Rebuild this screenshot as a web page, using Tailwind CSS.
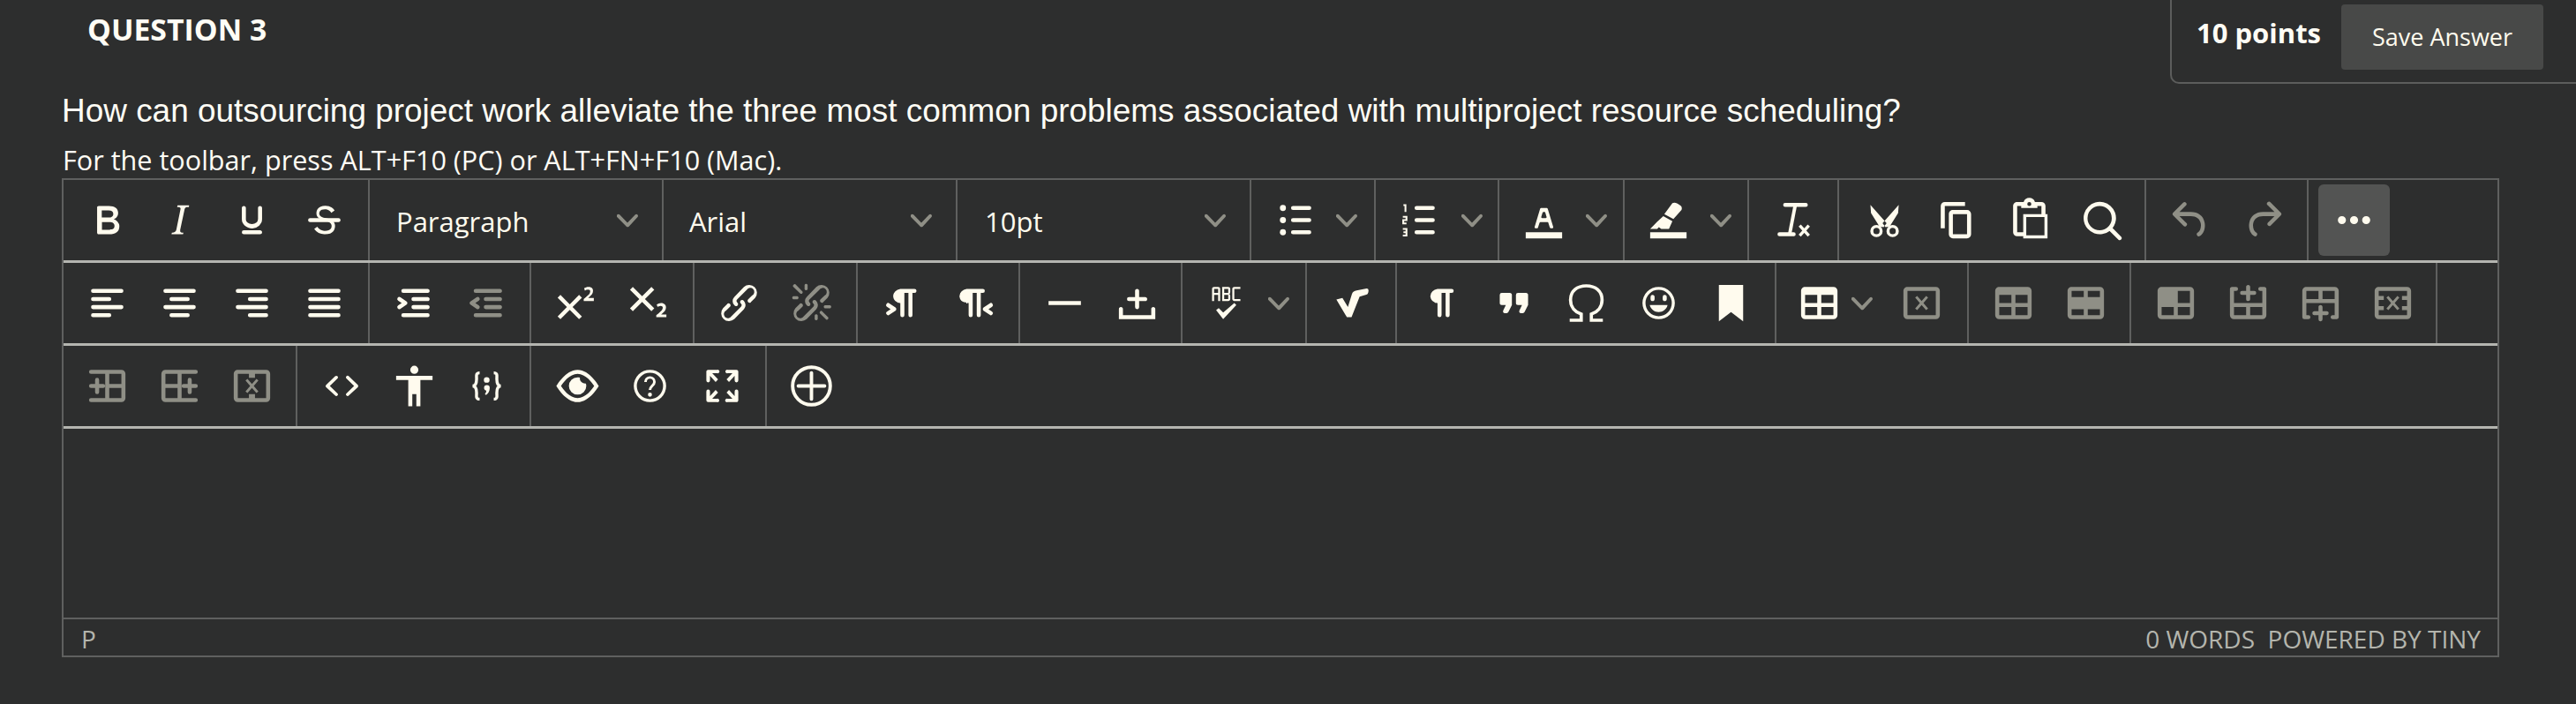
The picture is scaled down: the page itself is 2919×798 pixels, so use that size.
<!DOCTYPE html>
<html lang="en">
<head>
    <meta charset="UTF-8">
    <title>Question 3</title>
    <script src="https://cdn.jsdelivr.net/npm/@tailwindcss/browser@4"></script>
</head>
<body class="bg-[#2d2e2e] text-[#fffbee] font-['Open_Sans',sans-serif] h-[798px] overflow-hidden">

<!-- Header -->
<div class="flex justify-between h-[95px]">
    <h2 class="pl-[99px] pt-[10px] text-[33.8px] leading-[46px] font-bold text-[#fffdf5]">QUESTION 3</h2>
    <div class="w-[460px] h-[95px] border-l-2 border-b-2 border-[#5c5d5c] rounded-bl-[10px] flex items-start pl-[28px] pt-[5px]">
        <span class="text-[31px] leading-[64px] font-bold text-[#fffdf5] mr-[23px]">10 points</span>
        <button class="w-[229px] h-[74px] bg-[#484948] rounded-[4px] text-[27px] text-[#fffbee]">Save Answer</button>
    </div>
</div>

<div class="pl-[70px]">
    <p class="font-['Liberation_Sans',sans-serif] text-[36.95px] leading-[46px] mt-[8px] text-[#fffdf5]">How can outsourcing project work alleviate the three most common problems associated with multiproject resource scheduling?</p>
    <p class="text-[30.6px] leading-[41px] mt-[12px] pl-[1px] text-[#fffdf5]">For the toolbar, press ALT+F10 (PC) or ALT+FN+F10 (Mac).</p>

    <!-- Editor -->
    <div class="w-[2762px] border-2 border-[#5f605f]">

        <!-- Row 1 -->
        <div class="flex h-[94px] border-b-[3px] border-[#b4b5b0]">
            <div class="w-[347px] flex items-center justify-center border-r-2 border-[#5f605f]">
                <button class="w-[82px] flex justify-center"><svg viewBox="0 0 24 24" class="w-[55px] h-[55px] fill-current"><path d="M7.8 19c-.3 0-.5 0-.6-.2l-.2-.5V5.700c0-.2 0-.4.2-.5l.6-.2h5c1.500 0 2.700.3 3.500 1 .7.6 1.100 1.400 1.100 2.500a3 3 0 0 1-.6 1.900c-.4.6-1 1-1.600 1.200.4.1.9.3 1.300.6s.8.7 1 1.200c.4.4.5 1 .5 1.600 0 1.300-.4 2.300-1.300 3-.8.7-2.100 1-3.800 1H7.800zm5-8.300c.6 0 1.200-.1 1.600-.5.4-.3.6-.7.6-1.300 0-1.100-.8-1.700-2.300-1.700H9.300v3.500h3.400zm.5 6c.7 0 1.300-.1 1.700-.4.4-.4.6-.9.6-1.500s-.2-1-.7-1.400c-.4-.3-1-.4-2-.4H9.400v3.800h4z"/></svg></button>
                <button class="w-[82px] flex justify-center"><svg viewBox="0 0 24 24" class="w-[55px] h-[55px] fill-current"><path d="M16.700 4.700l-.1.9h-.3c-.6 0-1 0-1.400.3-.3.3-.4.6-.5 1.100l-2.100 9.800v.6c0 .5.4.8 1.400.8h.2l-.2.8H8l.2-.8h.2c1.100 0 1.800-.5 2-1.500l2-9.800.1-.5c0-.6-.4-.8-1.400-.8h-.3l.2-.9h5.800z"/></svg></button>
                <button class="w-[82px] flex justify-center"><svg viewBox="0 0 24 24" class="w-[55px] h-[55px] fill-current"><path d="M16 5c.6 0 1 .4 1 1v5.500a4 4 0 0 1-.4 1.800l-1 1.400a5.300 5.300 0 0 1-5.500 1 5 5 0 0 1-1.600-1c-.5-.4-.8-.9-1.100-1.400a4 4 0 0 1-.4-1.800V6c0-.6.4-1 1-1s1 .4 1 1v5.500c0 .3 0 .6.2 1l.6.7a3.300 3.300 0 0 0 2.200.8 3.400 3.400 0 0 0 2.200-.8c.3-.2.4-.5.6-.8l.2-.9V6c0-.6.4-1 1-1zM8 17h8c.6 0 1 .4 1 1s-.4 1-1 1H8a1 1 0 0 1 0-2z"/></svg></button>
                <button class="w-[82px] flex justify-center"><svg viewBox="0 0 24 24" class="w-[55px] h-[55px] fill-current"><path d="M15.600 8.500c-.5-.7-1-1.100-1.300-1.300-.6-.4-1.300-.6-2-.6-2.700 0-2.800 1.700-2.800 2.100 0 1.600 1.800 2 3.200 2.300 4.400.9 4.600 2.800 4.600 3.900 0 1.400-.7 4.100-5 4.100A6.200 6.200 0 0 1 7 16.400l1.500-1.100c.4.6 1.600 2 3.700 2 1.600 0 2.500-.4 3-1 .3-.4.4-.9.4-1.400 0-.8-.4-2-3.100-2.600-1.500-.4-2.700-.7-3.600-1.600-.5-.6-.8-1.300-.8-2 0-1.400.6-3.800 4.400-3.800 1.400 0 2.400.4 3 .8.5.3 1 .8 1.600 1.500l-1.500 1.100z"/><path d="M5 11h14a1 1 0 0 1 0 2H5a1 1 0 0 1 0-2z"/></svg></button>
            </div>
            <div class="w-[333px] flex items-center justify-between pl-[30px] pr-[27px] border-r-2 border-[#5f605f] text-[31px]">
                <span class="pt-[4px]">Paragraph</span>
                <svg viewBox="0 0 10 10" class="w-[24px] h-[24px] fill-[#8f8f86]"><path d="M8.700 2.200c.3-.3.8-.3 1 0 .4.4.4.9 0 1.200L5.700 7.800c-.3.3-.9.3-1.200 0L.2 3.400a.8.8 0 0 1 0-1.200c.3-.3.8-.3 1.100 0L5 6l3.700-3.800z"/></svg>
            </div>
            <div class="w-[333px] flex items-center justify-between pl-[29px] pr-[27px] border-r-2 border-[#5f605f] text-[31px]">
                <span class="pt-[4px]">Arial</span>
                <svg viewBox="0 0 10 10" class="w-[24px] h-[24px] fill-[#8f8f86]"><path d="M8.700 2.200c.3-.3.8-.3 1 0 .4.4.4.9 0 1.200L5.700 7.800c-.3.3-.9.3-1.200 0L.2 3.400a.8.8 0 0 1 0-1.200c.3-.3.8-.3 1.100 0L5 6l3.700-3.800z"/></svg>
            </div>
            <div class="w-[333px] flex items-center justify-between pl-[31px] pr-[27px] border-r-2 border-[#5f605f] text-[31px]">
                <span class="pt-[4px]">10pt</span>
                <svg viewBox="0 0 10 10" class="w-[24px] h-[24px] fill-[#8f8f86]"><path d="M8.700 2.200c.3-.3.8-.3 1 0 .4.4.4.9 0 1.200L5.700 7.800c-.3.3-.9.3-1.200 0L.2 3.400a.8.8 0 0 1 0-1.200c.3-.3.8-.3 1.100 0L5 6l3.700-3.800z"/></svg>
            </div>
            <!-- Lists -->
            <div class="w-[141px] flex items-center justify-center gap-[19px] pl-[2px] border-r-2 border-[#5f605f]">
                <svg viewBox="0 0 24 24" class="w-[55px] h-[55px] fill-none stroke-current stroke-2"><path stroke-linecap="round" d="M11 6h8M11 12h8M11 18h8"/><circle cx="6" cy="6" r="1.500" class="fill-current stroke-0"/><circle cx="6" cy="12" r="1.500" class="fill-current stroke-0"/><circle cx="6" cy="18" r="1.500" class="fill-current stroke-0"/></svg>
                <svg viewBox="0 0 10 10" class="w-[24px] h-[24px] fill-[#8f8f86]"><path d="M8.700 2.200c.3-.3.8-.3 1 0 .4.4.4.9 0 1.200L5.700 7.800c-.3.3-.9.3-1.200 0L.2 3.400a.8.8 0 0 1 0-1.200c.3-.3.8-.3 1.100 0L5 6l3.700-3.800z"/></svg>
            </div>
            <div class="w-[140px] flex items-center justify-center gap-[21px] pl-[3px] border-r-2 border-[#5f605f]">
                <svg viewBox="0 0 24 24" class="w-[55px] h-[55px] fill-none stroke-current"><path stroke-linecap="round" stroke-width="2" d="M11 6h8M11 12h8M11 18h8"/><path stroke-width=".9" d="M4.500 4.600h1v3.400M4.200 10.400H6v1.600H4.400v1.600H6M4.200 16.400H6v3.200H4.200M4.500 18H6"/></svg>
                <svg viewBox="0 0 10 10" class="w-[24px] h-[24px] fill-[#8f8f86]"><path d="M8.700 2.200c.3-.3.8-.3 1 0 .4.4.4.9 0 1.200L5.700 7.800c-.3.3-.9.3-1.200 0L.2 3.400a.8.8 0 0 1 0-1.200c.3-.3.8-.3 1.100 0L5 6l3.700-3.800z"/></svg>
            </div>
            <!-- Text colour -->
            <div class="w-[142px] flex items-center justify-center gap-[20px] pl-[4px] border-r-2 border-[#5f605f]">
                <svg viewBox="0 0 24 24" class="w-[55px] h-[55px] fill-current"><path d="M3 18h18v3H3z"/><path d="M8.700 16h-.8a.5.5 0 0 1-.5-.6l2.700-9c.1-.3.3-.4.5-.4h2.800c.2 0 .4.1.5.4l2.700 9a.5.5 0 0 1-.5.6h-.8a.5.5 0 0 1-.4-.4l-.7-2.200c0-.2-.3-.4-.5-.4h-3.400c-.2 0-.4.2-.5.4l-.7 2.200c0 .3-.2.4-.4.4zm2.600-7.600l-.6 2a.5.5 0 0 0 .5.6h1.600a.5.5 0 0 0 .5-.6l-.6-2c0-.3-.3-.4-.5-.4h-.4c-.2 0-.4.1-.5.4z"/></svg>
                <svg viewBox="0 0 10 10" class="w-[24px] h-[24px] fill-[#8f8f86]"><path d="M8.700 2.200c.3-.3.8-.3 1 0 .4.4.4.9 0 1.200L5.700 7.800c-.3.3-.9.3-1.200 0L.2 3.400a.8.8 0 0 1 0-1.200c.3-.3.8-.3 1.100 0L5 6l3.700-3.800z"/></svg>
            </div>
            <div class="w-[141px] flex items-center justify-center gap-[20px] pl-[4px] border-r-2 border-[#5f605f]">
                <svg viewBox="0 0 24 24" class="w-[55px] h-[55px] fill-current"><path d="M3 18h18v3H3z"/><path d="M14 3.600q1-.6 2.500.2l1.500 1q1 .7.5 2.200l-4 4.500L10 9zM9.500 10l4.500 2.500-1.700 3.900H8.500l-1.200-.9-.8.900H3l3.300-3.400z"/></svg>
                <svg viewBox="0 0 10 10" class="w-[24px] h-[24px] fill-[#8f8f86]"><path d="M8.700 2.200c.3-.3.8-.3 1 0 .4.4.4.9 0 1.200L5.700 7.800c-.3.3-.9.3-1.200 0L.2 3.400a.8.8 0 0 1 0-1.200c.3-.3.8-.3 1.100 0L5 6l3.700-3.800z"/></svg>
            </div>
            <div class="w-[102px] flex items-center justify-center border-r-2 border-[#5f605f]">
                <svg viewBox="0 0 24 24" class="w-[55px] h-[55px] fill-none stroke-current"><path stroke-width="2" stroke-linecap="round" d="M7.800 4.500H18M5 19h7"/><path stroke-width="1.700" d="M12.800 4.500L10 19"/><path stroke-width="1.500" d="M15 14.700l4.500 5M19.500 14.700l-4.500 5"/></svg>
            </div>
            <!-- Clipboard and search -->
            <div class="w-[348px] flex items-center justify-center pl-[2px] border-r-2 border-[#5f605f]">
                <button class="w-[82px] flex justify-center"><svg viewBox="0 0 24 24" class="w-[55px] h-[55px] fill-current"><path d="M5 4.500L13 13.500 11.500 15.500 9.500 15.200 5.300 8.500zM19 4.500L11 13.500 12.500 15.500 14.500 15.200 18.700 8.500z"/><circle cx="8" cy="17.400" r="2.300" class="fill-none stroke-current stroke-[1.500]"/><circle cx="16" cy="17.400" r="2.300" class="fill-none stroke-current stroke-[1.500]"/></svg></button>
                <button class="w-[82px] flex justify-center"><svg viewBox="0 0 24 24" class="w-[55px] h-[55px] fill-current"><path d="M16 3H6a2 2 0 0 0-2 2v11h2V5h10V3zm1 4a2 2 0 0 1 2 2v10a2 2 0 0 1-2 2h-7a2 2 0 0 1-2-2V9c0-1.100.9-2 2-2h7zm0 12V9h-7v10h7z"/></svg></button>
                <button class="w-[82px] flex justify-center"><svg viewBox="0 0 24 24" class="w-[55px] h-[55px] fill-current"><path fill-rule="evenodd" d="M18 9V5h-2v1H8V5H6v13h3V9h9zM9 20H6a2 2 0 0 1-2-2V5c0-1.100.9-2 2-2h3.200A3 3 0 0 1 12 1a3 3 0 0 1 2.800 2H18a2 2 0 0 1 2 2v4h1v12H9v-1zm1.500-9.500v9h9v-9h-9zM12 3a1 1 0 0 0 0 2 1 1 0 0 0 0-2z"/></svg></button>
                <button class="w-[82px] flex justify-center"><svg viewBox="0 0 24 24" class="w-[55px] h-[55px] fill-current"><path d="M16 17.300a8 8 0 1 1 1.400-1.400l4.300 4.400a1 1 0 0 1-1.400 1.400l-4.400-4.300zm-5-.3a6 6 0 1 0 0-12 6 6 0 0 0 0 12z"/></svg></button>
            </div>
            <div class="w-[184px] flex items-center justify-center border-r-2 border-[#5f605f] text-[#8f8f86]">
                <button class="w-[82px] flex justify-center"><svg viewBox="0 0 24 24" class="w-[55px] h-[55px] fill-current"><path d="M6.400 8H12c3.700 0 6.200 2 6.800 5.100.6 2.700-.4 5.600-2.300 6.800a1 1 0 0 1-1-1.800c1.100-.6 1.800-2.700 1.400-4.600-.5-2.100-2.100-3.500-4.900-3.500H6.400l3.300 3.300a1 1 0 1 1-1.400 1.400l-5-5a1 1 0 0 1 0-1.400l5-5a1 1 0 0 1 1.400 1.400L6.400 8z"/></svg></button>
                <button class="w-[82px] flex justify-center"><svg viewBox="0 0 24 24" class="w-[55px] h-[55px] fill-current"><path d="M17.600 10H12c-2.800 0-4.400 1.400-4.900 3.500-.4 2 .3 4 1.400 4.600a1 1 0 1 1-1 1.800c-2-1.200-2.900-4.100-2.300-6.800.6-3 3-5.100 6.800-5.100h5.600l-3.300-3.300a1 1 0 1 1 1.400-1.400l5 5a1 1 0 0 1 0 1.400l-5 5a1 1 0 0 1-1.400-1.400l3.300-3.300z"/></svg></button>
            </div>
            <div class="pl-[11px] flex items-center">
                <button class="w-[81px] h-[81px] bg-[#535453] rounded-[6px] flex items-center justify-center"><svg viewBox="0 0 24 24" class="w-[55px] h-[55px] fill-current"><path d="M6 10a2 2 0 1 0 0 4 2 2 0 0 0 0-4zm12 0a2 2 0 1 0 0 4 2 2 0 0 0 0-4zm-6 0a2 2 0 1 0 0 4 2 2 0 0 0 0-4z"/></svg></button>
            </div>
        </div>

        <!-- Row 2 -->
        <div class="flex h-[94px] border-b-[3px] border-[#b4b5b0]">
            <div class="w-[347px] flex items-center justify-center border-r-2 border-[#5f605f]">
                <button class="w-[82px] flex justify-center"><svg viewBox="0 0 24 24" class="w-[55px] h-[55px] fill-none stroke-current stroke-2"><path stroke-linecap="round" d="M5 6h14M5 10h8M5 14h14M5 18h8"/></svg></button>
                <button class="w-[82px] flex justify-center"><svg viewBox="0 0 24 24" class="w-[55px] h-[55px] fill-none stroke-current stroke-2"><path stroke-linecap="round" d="M5 6h14M8 10h8M5 14h14M8 18h8"/></svg></button>
                <button class="w-[82px] flex justify-center"><svg viewBox="0 0 24 24" class="w-[55px] h-[55px] fill-none stroke-current stroke-2"><path stroke-linecap="round" d="M5 6h14M11 10h8M5 14h14M11 18h8"/></svg></button>
                <button class="w-[82px] flex justify-center"><svg viewBox="0 0 24 24" class="w-[55px] h-[55px] fill-none stroke-current stroke-2"><path stroke-linecap="round" d="M5 6h14M5 10h14M5 14h14M5 18h14"/></svg></button>
            </div>
            <div class="w-[183px] flex items-center justify-center border-r-2 border-[#5f605f]">
                <button class="w-[82px] flex justify-center"><svg viewBox="0 0 24 24" class="w-[55px] h-[55px] fill-current"><path d="M7 5h12c.6 0 1 .4 1 1s-.4 1-1 1H7a1 1 0 1 1 0-2zm5 4h7c.6 0 1 .4 1 1s-.4 1-1 1h-7a1 1 0 0 1 0-2zm0 4h7c.6 0 1 .4 1 1s-.4 1-1 1h-7a1 1 0 0 1 0-2zm-5 4h12a1 1 0 0 1 0 2H7a1 1 0 0 1 0-2zm-2.600-3.800L6.200 12l-1.800-1.200a1 1 0 0 1 1.200-1.600l3 2a1 1 0 0 1 0 1.600l-3 2a1 1 0 1 1-1.200-1.600z"/></svg></button>
                <button class="w-[82px] flex justify-center text-[#8f8f86]"><svg viewBox="0 0 24 24" class="w-[55px] h-[55px] fill-current"><path d="M7 5h12c.6 0 1 .4 1 1s-.4 1-1 1H7a1 1 0 1 1 0-2zm5 4h7c.6 0 1 .4 1 1s-.4 1-1 1h-7a1 1 0 0 1 0-2zm0 4h7c.6 0 1 .4 1 1s-.4 1-1 1h-7a1 1 0 0 1 0-2zm-5 4h12a1 1 0 0 1 0 2H7a1 1 0 0 1 0-2zm1.600-3.800a1 1 0 0 1-1.200 1.600l-3-2a1 1 0 0 1 0-1.600l3-2a1 1 0 0 1 1.200 1.600L6.800 12l1.800 1.200z"/></svg></button>
            </div>
            <div class="w-[185px] flex items-center justify-center border-r-2 border-[#5f605f]">
                <button class="w-[82px] flex justify-center"><svg viewBox="0 0 24 24" class="w-[55px] h-[55px] fill-current"><path d="M15 9.400L10.400 14l4.600 4.600-1.400 1.400L9 15.400 4.400 20 3 18.600 7.600 14 3 9.400 4.400 8 9 12.600 13.600 8 15 9.400zm5.900 1.600h-5v-1l1-.8 1.700-1.600c.3-.5.5-.9.5-1.300 0-.3 0-.5-.2-.7-.2-.2-.5-.3-.9-.3l-.8.2-.7.4-.4-1.200c.2-.2.5-.4 1-.5.3-.2.8-.2 1.200-.2.7 0 1.200.2 1.600.5.4.4.6.9.6 1.500s-.2 1.100-.5 1.600a8 8 0 0 1-1.300 1.300l-.6.6h2.800v1z"/></svg></button>
                <button class="w-[82px] flex justify-center"><svg viewBox="0 0 24 24" class="w-[55px] h-[55px] fill-current"><path d="M10.400 10l4.600 4.600-1.400 1.400L9 11.400 4.400 16 3 14.600 7.600 10 3 5.400 4.400 4 9 8.600 13.600 4 15 5.400 10.400 10zM21 19h-5v-1l1-.8 1.700-1.600c.3-.4.5-.8.5-1.200 0-.3 0-.6-.2-.7-.2-.2-.5-.3-.9-.3a2 2 0 0 0-.8.2l-.7.3-.4-1.100 1-.6 1.200-.2c.8 0 1.400.3 1.800.7.4.4.6.9.6 1.500s-.2 1.100-.5 1.600a8 8 0 0 1-1.300 1.300l-.6.6h2.600V19z"/></svg></button>
            </div>
            <div class="w-[185px] flex items-center justify-center border-r-2 border-[#5f605f]">
                <button class="w-[82px] flex justify-center"><svg viewBox="0 0 24 24" class="w-[55px] h-[55px] fill-current"><path d="M6.200 12.300a1 1 0 0 1 1.400 1.400l-2 2a2 2 0 1 0 2.600 2.800l4.800-4.800a1 1 0 0 0 0-1.400 1 1 0 1 1 1.400-1.300 2.900 2.900 0 0 1 0 4L9.600 20a3.900 3.900 0 0 1-5.500-5.500l2-2zm11.600-.6a1 1 0 0 1-1.400-1.400l2-2a2 2 0 1 0-2.600-2.800L11 10.300a1 1 0 0 0 0 1.400A1 1 0 1 1 9.600 13a2.900 2.900 0 0 1 0-4L14.400 4a3.900 3.900 0 0 1 5.500 5.500l-2 2z"/></svg></button>
                <button class="w-[82px] flex justify-center text-[#8f8f86]"><svg viewBox="0 0 24 24" class="w-[55px] h-[55px] fill-current"><path d="M6.200 12.300a1 1 0 0 1 1.400 1.400l-2 2a2 2 0 1 0 2.600 2.800l4.800-4.800a1 1 0 0 0 0-1.400 1 1 0 1 1 1.400-1.300 2.900 2.900 0 0 1 0 4L9.600 20a3.900 3.900 0 0 1-5.500-5.500l2-2zm11.600-.6a1 1 0 0 1-1.400-1.400l2.100-2a2 2 0 1 0-2.700-2.700L11 10.300a1 1 0 0 0 0 1.400A1 1 0 1 1 9.600 13a2.900 2.900 0 0 1 0-4L14.400 4a3.900 3.900 0 0 1 5.500 5.500l-2 2zM7.600 6.300a.8.8 0 0 1-1 1.100L3.300 4.200a.8.8 0 1 1 1.100-1.100l3.200 3.200zM5.100 8.600a.8.8 0 0 1 0 1.500H3a.8.8 0 0 1 0-1.500h2zm5-3.500a.8.8 0 0 1-1.500 0V3a.8.8 0 0 1 1.500 0v2zm6 11.800a.8.8 0 0 1 1-1l3.200 3.200a.8.8 0 0 1-1 1.100L16 16.900zm2.500-2.300a.8.8 0 0 1 0-1.500h2.100a.8.8 0 1 1 0 1.500h-2zm-5 3.500a.8.8 0 0 1 1.500 0V20a.8.8 0 0 1-1.500 0v-2z"/></svg></button>
            </div>
            <div class="w-[184px] flex items-center justify-center border-r-2 border-[#5f605f]">
                <button class="w-[82px] flex justify-center"><svg viewBox="0 0 24 24" class="w-[55px] h-[55px] fill-current"><path d="M11 5h7a1 1 0 0 1 0 2h-1v11a1 1 0 0 1-2 0V7h-2v11a1 1 0 0 1-2 0v-6c-.5 0-1 0-1.400-.3A3.400 3.400 0 0 1 7.800 10a3.300 3.300 0 0 1 0-2.800 3.400 3.400 0 0 1 1.800-1.800L11 5zM4.400 16.200L6.200 15l-1.800-1.200a1 1 0 0 1 1.200-1.600l3 2a1 1 0 0 1 0 1.600l-3 2a1 1 0 1 1-1.200-1.600z"/></svg></button>
                <button class="w-[82px] flex justify-center"><svg viewBox="0 0 24 24" class="w-[55px] h-[55px] fill-current"><path d="M8 5h8a1 1 0 0 1 0 2h-1v11a1 1 0 0 1-2 0V7h-2v11a1 1 0 0 1-2 0v-6c-.5 0-1 0-1.400-.3A3.400 3.400 0 0 1 4.800 10a3.300 3.300 0 0 1 0-2.800 3.400 3.400 0 0 1 1.800-1.800L8 5zM20.600 13.800L18.800 15l1.800 1.200a1 1 0 0 1-1.200 1.600l-3-2a1 1 0 0 1 0-1.600l3-2a1 1 0 0 1 1.200 1.600z"/></svg></button>
            </div>
            <div class="w-[184px] flex items-center justify-center border-r-2 border-[#5f605f]">
                <button class="w-[82px] flex justify-center"><svg viewBox="0 0 24 24" class="w-[55px] h-[55px] fill-current"><path d="M4 11h16v2H4z"/></svg></button>
                <button class="w-[82px] flex justify-center"><svg viewBox="0 0 24 24" class="w-[55px] h-[55px] fill-current"><path d="M11 11H8a1 1 0 1 1 0-2h3V6c0-.6.4-1 1-1s1 .4 1 1v3h3c.6 0 1 .4 1 1s-.4 1-1 1h-3v3c0 .6-.4 1-1 1a1 1 0 0 1-1-1v-3zm10 4v5H3v-5c0-.6.4-1 1-1s1 .4 1 1v3h14v-3c0-.6.4-1 1-1s1 .4 1 1z"/></svg></button>
            </div>
            <div class="w-[141px] flex items-center justify-center gap-[20px] pl-[3px] border-r-2 border-[#5f605f]">
                <svg viewBox="0 0 24 24" class="w-[55px] h-[55px] fill-current"><path d="M6 8v3H5V5c0-.3.1-.5.3-.7.2-.2.4-.3.7-.3h2c.3 0 .5.1.7.3.2.2.3.4.3.7v6H8V8H6zm0-3v2h2V5H6zm13 0h-3v5h3v1h-3a1 1 0 0 1-.7-.3 1 1 0 0 1-.3-.7V5c0-.3.1-.5.3-.7.2-.2.4-.3.7-.3h3v1zm-5 1.500l-.1.7c-.1.2-.3.3-.6.3.3 0 .5.1.6.3l.1.7V10c0 .3-.1.5-.3.7a1 1 0 0 1-.7.3h-3V4h3c.3 0 .5.1.7.3.2.2.3.4.3.7v1.500zM13 10V8h-2v2h2zm0-3V5h-2v2h2zm3 5l1 1-6.500 7L7 15.500l1.300-1 2.200 2.200L16 12z"/></svg>
                <svg viewBox="0 0 10 10" class="w-[24px] h-[24px] fill-[#8f8f86]"><path d="M8.700 2.200c.3-.3.8-.3 1 0 .4.4.4.9 0 1.200L5.700 7.800c-.3.3-.9.3-1.200 0L.2 3.400a.8.8 0 0 1 0-1.200c.3-.3.8-.3 1.100 0L5 6l3.700-3.800z"/></svg>
            </div>
            <div class="w-[102px] flex items-center justify-center border-r-2 border-[#5f605f]">
                <svg viewBox="0 0 24 24" class="w-[55px] h-[55px] fill-current"><path d="M4.500 10.300L7.500 9.500l2.700 4.500 2-6.500Q12.800 6 14.500 5.800l5-1q1.200 0 .8 1.800-.2 1-1 1.300L16 8.800 12 19H9.700z"/></svg>
            </div>
            <div class="w-[430px] flex items-center justify-center border-r-2 border-[#5f605f]">
                <button class="w-[82px] flex justify-center"><svg viewBox="0 0 24 24" class="w-[55px] h-[55px] fill-current"><path d="M10 5h7a1 1 0 0 1 0 2h-1v11a1 1 0 0 1-2 0V7h-2v11a1 1 0 0 1-2 0v-6c-.5 0-1 0-1.400-.3A3.400 3.400 0 0 1 6.800 10a3.300 3.300 0 0 1 0-2.800 3.400 3.400 0 0 1 1.800-1.800L10 5z"/></svg></button>
                <button class="w-[82px] flex justify-center"><svg viewBox="0 0 24 24" class="w-[55px] h-[55px] fill-current"><path d="M7.500 17h.9c.4 0 .7-.2.9-.6L11 13V8c0-.6-.4-1-1-1H6a1 1 0 0 0-1 1v4c0 .6.4 1 1 1h2l-1.300 2.700a1 1 0 0 0 .8 1.300zm8 0h.9c.4 0 .7-.2.9-.6L19 13V8c0-.6-.4-1-1-1h-4a1 1 0 0 0-1 1v4c0 .6.4 1 1 1h2l-1.300 2.700a1 1 0 0 0 .8 1.300z"/></svg></button>
                <button class="w-[82px] flex justify-center"><svg viewBox="0 0 24 24" class="w-[55px] h-[55px] fill-none stroke-current stroke-[1.600]"><path d="M3.800 20.500h5.700v-3c-3-1-5.300-3.500-5.300-7C4.200 6 7.500 3.500 12 3.500S19.800 6 19.800 10.500c0 3.500-2.300 6-5.300 7v3h5.700"/></svg></button>
                <button class="w-[82px] flex justify-center"><svg viewBox="0 0 24 24" class="w-[55px] h-[55px] fill-current"><path d="M9 11c.6 0 1-.4 1-1V9c0-.6-.4-1-1-1a1 1 0 0 0-1 1v1c0 .6.4 1 1 1zm6 0c.6 0 1-.4 1-1V9c0-.6-.4-1-1-1a1 1 0 0 0-1 1v1c0 .6.4 1 1 1zm-3 5.500c2.100 0 4-1.500 4.400-3.500H7.600c.5 2 2.300 3.500 4.400 3.500zM12 4a8 8 0 1 0 0 16 8 8 0 0 0 0-16zm0 14.500a6.500 6.500 0 1 1 0-13 6.500 6.500 0 0 1 0 13z"/></svg></button>
                <button class="w-[82px] flex justify-center"><svg viewBox="0 0 24 24" class="w-[55px] h-[55px] fill-current"><path d="M6 3h12v18l-6-4.500L6 21z"/></svg></button>
            </div>
            <!-- Table tools -->
            <div class="w-[218px] flex items-center border-r-2 border-[#5f605f] pl-[21px]">
                <svg viewBox="0 0 24 24" class="w-[55px] h-[55px] fill-current"><path d="M19 4a2 2 0 0 1 2 2v12a2 2 0 0 1-2 2H5a2 2 0 0 1-2-2V6c0-1.100.9-2 2-2h14zM5 14v4h6v-4H5zm14 0h-6v4h6v-4zm0-6h-6v4h6V8zM5 12h6V8H5v4z"/></svg>
                <svg viewBox="0 0 10 10" class="w-[24px] h-[24px] ml-[9px] fill-[#8f8f86]"><path d="M8.700 2.200c.3-.3.8-.3 1 0 .4.4.4.9 0 1.200L5.700 7.800c-.3.3-.9.3-1.200 0L.2 3.400a.8.8 0 0 1 0-1.200c.3-.3.8-.3 1.100 0L5 6l3.700-3.800z"/></svg>
                <svg viewBox="0 0 24 24" class="w-[55px] h-[55px] ml-[28px] fill-[#8f8f86]"><path fill-rule="evenodd" d="M5 4h14a2 2 0 0 1 2 2v12a2 2 0 0 1-2 2H5a2 2 0 0 1-2-2V6c0-1.100.9-2 2-2zm0 2v12h14V6H5z"/><path d="M9.800 8.500l2.200 2.500 2.200-2.500 1 .8-2.300 2.700 2.300 2.700-1 .8-2.200-2.500-2.200 2.500-1-.8 2.300-2.700-2.300-2.700z"/></svg>
            </div>
            <div class="w-[184px] flex items-center justify-center border-r-2 border-[#5f605f] text-[#8f8f86]">
                <button class="w-[82px] flex justify-center"><svg viewBox="0 0 24 24" class="w-[55px] h-[55px] fill-current"><path d="M19 4a2 2 0 0 1 2 2v12a2 2 0 0 1-2 2H5a2 2 0 0 1-2-2V6c0-1.100.9-2 2-2h14zM5 14v4h6v-4H5zm14 0h-6v4h6v-4zm0-6h-6v4h6V8zM5 12h6V8H5v4z"/></svg></button>
                <button class="w-[82px] flex justify-center"><svg viewBox="0 0 24 24" class="w-[55px] h-[55px] fill-current"><path d="M5 4h14a2 2 0 0 1 2 2v12a2 2 0 0 1-2 2H5a2 2 0 0 1-2-2V6c0-1.100.9-2 2-2zm0 2v3h6V6H5zm8 0v3h6V6h-6zM5 15v3h6v-3H5zm8 0v3h6v-3h-6z"/></svg></button>
            </div>
            <div class="w-[347px] flex items-center justify-center pl-[2px] border-r-2 border-[#5f605f] text-[#8f8f86]">
                <button class="w-[82px] flex justify-center"><svg viewBox="0 0 24 24" class="w-[55px] h-[55px] fill-current"><path d="M5 4h14a2 2 0 0 1 2 2v12a2 2 0 0 1-2 2H5a2 2 0 0 1-2-2V6c0-1.100.9-2 2-2zm8 2v6h6V6h-6zM5 14v4h6v-4H5zm8 0v4h6v-4h-6z"/></svg></button>
                <button class="w-[82px] flex justify-center"><svg viewBox="0 0 24 24" class="w-[55px] h-[55px] fill-current"><path d="M6 4a1 1 0 1 1 0 2H5v6h14V6h-1a1 1 0 0 1 0-2h2c.6 0 1 .4 1 1v13a2 2 0 0 1-2 2H5a2 2 0 0 1-2-2V5c0-.6.4-1 1-1h2zm5 10H5v4h6v-4zm8 0h-6v4h6v-4zM12 3c.5 0 1 .4 1 .9V6h2a1 1 0 0 1 0 2h-2v2a1 1 0 0 1-2 .1V8H9a1 1 0 0 1 0-2h2V4c0-.6.4-1 1-1z"/></svg></button>
                <button class="w-[82px] flex justify-center"><svg viewBox="0 0 24 24" class="w-[55px] h-[55px] fill-current"><path d="M12 13c.5 0 .9.4 1 .9V16h2a1 1 0 0 1 .1 2H13v2a1 1 0 0 1-2 .1V18H9a1 1 0 0 1-.1-2H11v-2c0-.6.4-1 1-1zm6 7a1 1 0 0 1 0-2h1v-6H5v6h1a1 1 0 0 1 0 2H4a1 1 0 0 1-1-1V6c0-1.100.9-2 2-2h14a2 2 0 0 1 2 2v13c0 .5-.4 1-1 1h-2zM11 6H5v4h6V6zm8 0h-6v4h6V6z"/></svg></button>
                <button class="w-[82px] flex justify-center"><svg viewBox="0 0 24 24" class="w-[55px] h-[55px] fill-current"><path fill-rule="evenodd" d="M5 4h14a2 2 0 0 1 2 2v12a2 2 0 0 1-2 2H5a2 2 0 0 1-2-2V6c0-1.100.9-2 2-2zm0 2v2.500h2.500v2H5v3h2.500v2H5V18h14v-2.500h-2.500v-2H19v-3h-2.500v-2H19V6H5z"/><path d="M9.800 8.500l2.200 2.500 2.200-2.500 1 .8-2.300 2.700 2.300 2.700-1 .8-2.200-2.500-2.200 2.500-1-.8 2.300-2.700-2.300-2.700z"/></svg></button>
            </div>
        </div>

        <!-- Row 3 -->
        <div class="flex h-[94px] border-b-[3px] border-[#b4b5b0]">
            <div class="w-[265px] flex items-center justify-center border-r-2 border-[#5f605f] text-[#8f8f86]">
                <button class="w-[82px] flex justify-center"><svg viewBox="0 0 24 24" class="w-[55px] h-[55px] fill-current"><path fill-rule="evenodd" d="M4 4h15a2 2 0 0 1 2 2v12a2 2 0 0 1-2 2H4a1 1 0 0 1 0-2h7V6H4a1 1 0 0 1 0-2zm9 2v5h6V6h-6zm0 7v5h6v-5h-6z"/><path d="M7 8a1 1 0 0 1 1 1v2h2a1 1 0 0 1 0 2H8v2a1 1 0 0 1-2 0v-2H4a1 1 0 0 1 0-2h2V9a1 1 0 0 1 1-1z"/></svg></button>
                <button class="w-[82px] flex justify-center"><svg viewBox="0 0 24 24" class="w-[55px] h-[55px] fill-current -scale-x-100"><path fill-rule="evenodd" d="M4 4h15a2 2 0 0 1 2 2v12a2 2 0 0 1-2 2H4a1 1 0 0 1 0-2h7V6H4a1 1 0 0 1 0-2zm9 2v5h6V6h-6zm0 7v5h6v-5h-6z"/><path d="M7 8a1 1 0 0 1 1 1v2h2a1 1 0 0 1 0 2H8v2a1 1 0 0 1-2 0v-2H4a1 1 0 0 1 0-2h2V9a1 1 0 0 1 1-1z"/></svg></button>
                <button class="w-[82px] flex justify-center"><svg viewBox="0 0 24 24" class="w-[55px] h-[55px] fill-current"><path fill-rule="evenodd" d="M5 4h14a2 2 0 0 1 2 2v12a2 2 0 0 1-2 2H5a2 2 0 0 1-2-2V6c0-1.100.9-2 2-2zm0 2v12h5.500v-2h3v2H19V6h-5.500v2h-3V6H5z"/><path d="M9.800 8.500l2.200 2.500 2.200-2.500 1 .8-2.300 2.700 2.300 2.700-1 .8-2.200-2.500-2.200 2.500-1-.8 2.300-2.700-2.300-2.700z"/></svg></button>
            </div>
            <div class="w-[265px] flex items-center justify-center pl-[2px] border-r-2 border-[#5f605f]">
                <button class="w-[82px] flex justify-center"><svg viewBox="0 0 24 24" class="w-[55px] h-[55px] fill-current"><path d="M9.800 15.700c.3.3.3.8 0 1-.3.4-.9.4-1.200 0l-4.400-4.100a.8.8 0 0 1 0-1.200l4.400-4.200c.3-.3.9-.3 1.200 0 .3.3.3.8 0 1.100L6 12l3.800 3.700zM14.200 15.700c-.3.3-.3.8 0 1 .4.4.9.4 1.200 0l4.400-4.100c.3-.3.3-.9 0-1.200l-4.400-4.200a.8.8 0 0 0-1.200 0c-.3.3-.3.8 0 1.100L18 12l-3.800 3.700z"/></svg></button>
                <button class="w-[82px] flex justify-center"><svg viewBox="0 0 24 24" class="w-[55px] h-[55px] fill-current"><path d="M12 2a2 2 0 1 1 0 4 2 2 0 0 1 0-4zm9 7h-6v13h-2v-6h-2v6H9V9H3V7h18v2z"/></svg></button>
                <button class="w-[82px] flex justify-center"><svg viewBox="0 0 24 24" class="w-[55px] h-[55px] fill-none stroke-current"><path stroke-width="1.500" d="M8.500 5.500C6.500 5.500 7 7 7 8.500S7 12 5 12c2 0 2 2 2 3.500s-.5 3 1.500 3M15.500 5.500c2 0 1.500 1.500 1.500 3s0 3.500 2 3.500c-2 0-2 2-2 3.500s.5 3-1.500 3"/><circle cx="12" cy="9" r="1.400" class="fill-current stroke-0"/><path class="fill-current stroke-0" d="M10.700 13a1.400 1.400 0 0 1 2.800 0c0 1.500-.7 2.800-1.800 3.500l-.6-.5c.5-.5.7-1.100.7-1.700-.6 0-1.100-.6-1.100-1.300z"/></svg></button>
            </div>
            <div class="w-[267px] flex items-center justify-center pl-[3px] border-r-2 border-[#5f605f]">
                <button class="w-[82px] flex justify-center"><svg viewBox="0 0 24 24" class="w-[55px] h-[55px] fill-current"><path fill-rule="evenodd" d="M12 4C6 4 1.500 12 1.500 12S6 20 12 20s10.500-8 10.500-8S18 4 12 4zm0 2c4 0 7.300 4.500 8.200 6-.9 1.500-4.200 6-8.200 6s-7.300-4.500-8.200-6C4.700 10.500 8 6 12 6z"/><path d="M12 7.700a4.300 4.300 0 1 0 4.300 4.300c0-.4-.1-.8-.2-1.200a2.700 2.700 0 0 1-3-3c-.4-.1-.7-.1-1.100-.1z"/></svg></button>
                <button class="w-[82px] flex justify-center"><svg viewBox="0 0 24 24" class="w-[55px] h-[55px] fill-current"><path d="M12 4a8 8 0 1 0 0 16 8 8 0 0 0 0-16zm0 14.500a6.500 6.500 0 1 1 0-13 6.500 6.500 0 0 1 0 13z"/><path d="M12 15.300a1 1 0 1 0 0 2 1 1 0 0 0 0-2z"/><path class="fill-none stroke-current stroke-[1.300]" d="M9.800 10c0-1.200 1-2.200 2.200-2.200s2.200 1 2.200 2.200c0 1.800-2.200 2-2.200 4"/></svg></button>
                <button class="w-[82px] flex justify-center"><svg viewBox="0 0 24 24" class="w-[55px] h-[55px] fill-current"><path d="M15.300 10l-1.200-1.300 2.900-3h-2.300a.9.9 0 1 1 0-1.700H19c.5 0 .9.4.9.9v4.400a.9.9 0 1 1-1.800 0V7l-2.800 3zM8.700 14l1.200 1.300-2.900 3h2.300a.9.9 0 1 1 0 1.700H5a.9.9 0 0 1-.9-.9v-4.400a.9.9 0 1 1 1.800 0V17l2.800-3zm0-4L5.900 7v2.300a.9.9 0 1 1-1.800 0V4.900c0-.5.4-.9.9-.9h4.400a.9.9 0 1 1 0 1.700H7l2.900 3L8.700 10zm6.600 4l2.800 3v-2.300a.9.9 0 1 1 1.800 0v4.400c0 .5-.4.9-.9.9h-4.400a.9.9 0 1 1 0-1.700H17l-2.900-3 1.200-1.300z"/></svg></button>
            </div>
            <div class="pl-[9px] flex items-center">
                <button class="w-[82px] flex justify-center"><svg viewBox="0 0 24 24" class="w-[55px] h-[55px] fill-none stroke-current stroke-[1.700]"><circle cx="12" cy="12" r="9.300"/><path stroke-linecap="round" d="M12 5.500v13M5.500 12h13"/></svg></button>
            </div>
        </div>

        <!-- Editing area -->
        <div class="h-[214px]"></div>

        <!-- Status bar -->
        <div class="flex justify-between items-center h-[43px] border-t-2 border-[#5f605f] text-[#b4b5ad] text-[28px] pl-[20px] pr-[19px]">
            <span class="pt-[2px]">P</span>
            <span class="whitespace-pre pt-[2px]">0 WORDS  POWERED BY TINY</span>
        </div>
    </div>
</div>

</body>
</html>
